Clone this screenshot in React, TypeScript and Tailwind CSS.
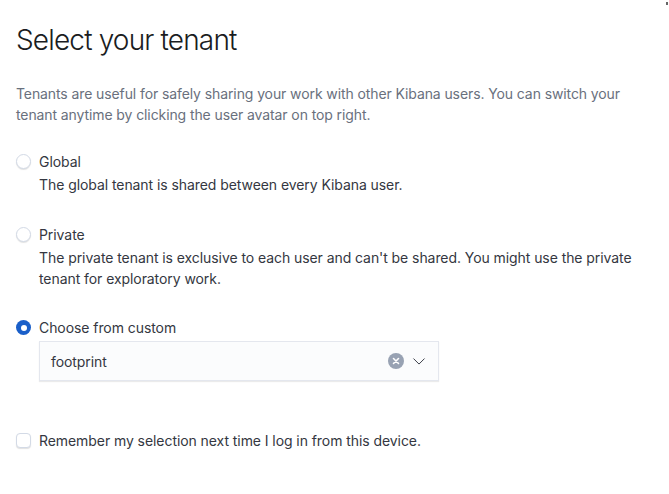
import React from 'react';

const font = {fontFamily: 'Inter, "Noto Sans", sans-serif'};

const Radio = ({checked}: {checked?: boolean}) => (
	checked ? (
		<span className="w-[15px] h-[15px] rounded-full bg-[#1A5FC9] flex items-center justify-center shrink-0">
			<span className="w-[6px] h-[6px] rounded-full bg-white"/>
		</span>
	) : (
		<span className="w-[15px] h-[15px] rounded-full border border-[#D3DAE6] bg-white shadow-[0_1px_1px_rgba(0,0,0,0.12)] shrink-0"/>
	)
);

const Option = ({label, desc, checked}: { label: string, desc?: React.ReactNode, checked?: boolean }) => (
	<div className="flex flex-col">
		<div className="flex items-center h-[21px]">
			<Radio checked={checked}/>
			<span className="ml-[8px] text-[14px] tracking-[-0.07px] text-[#343741]">{label}</span>
		</div>
		{desc && <p className="pl-[23px] text-[14px] leading-[21px] tracking-[-0.07px] text-[#343741] mt-[2px]">{desc}</p>}
	</div>
);

export default function App() {
	return (
		<div className="relative w-[669px] h-[494px] bg-white" style={font}>
			<span className="absolute top-[2px] right-[1px] w-[2px] h-[3px] bg-[#666]"/>
			<div className="pl-[16px] pr-[30px] pt-[22px]">
				<h1 className="text-[28px] font-light leading-[36px] tracking-[-0.03em] text-[#1a1c21]">Select your tenant</h1>
				<p className="mt-[25px] text-[14px] leading-[21px] tracking-[-0.1px] text-[#69707D]">
					Tenants are useful for safely sharing your work with other Kibana users. You can switch your
					tenant anytime by clicking the user avatar on top right.
				</p>
				<div className="mt-[26px] flex flex-col">
					<Option label="Global" desc="The global tenant is shared between every Kibana user."/>
					<div className="mt-[29px]">
						<Option label="Private"
										desc={<>The private tenant is exclusive to each user and can't be shared. You might use the private<br/>tenant for exploratory work.</>}/>
					</div>
					<div className="mt-[28px] flex flex-col">
						<Option label="Choose from custom" checked/>
						<div className="ml-[23px] mt-[3px] w-[400px] h-[40px] bg-[#FBFCFD] border border-[#E4E7EE] shadow-[0_1px_1px_rgba(0,0,0,0.08)] flex items-center pl-[11px] pr-[12px]">
							<span className="flex-1 text-[14px] tracking-[-0.07px] text-[#343741]">footprint</span>
							<span className="w-[16px] h-[16px] rounded-full bg-[#98A2B3] flex items-center justify-center">
								<svg width="8" height="8" viewBox="0 0 8 8">
									<path d="M1.5 1.5 L6.5 6.5 M6.5 1.5 L1.5 6.5" stroke="#fff" strokeWidth="1.6" strokeLinecap="round"/>
								</svg>
							</span>
							<svg className="ml-[8px]" width="14" height="14" viewBox="0 0 16 16">
								<path d="M2 5.5 L8 11.5 L14 5.5" fill="none" stroke="#343741" strokeWidth="1.1" strokeLinecap="round"
											strokeLinejoin="round"/>
							</svg>
						</div>
					</div>
				</div>
				<label className="mt-[49px] flex items-center h-[21px]">
					<span className="w-[15px] h-[15px] rounded-[4px] border border-[#D3DAE6] bg-white shadow-[0_1px_1px_rgba(0,0,0,0.12)] shrink-0"/>
					<span className="ml-[8px] text-[14px] tracking-[-0.07px] text-[#343741]">Remember my selection next time I log in from this device.</span>
				</label>
			</div>
		</div>
	);
}
